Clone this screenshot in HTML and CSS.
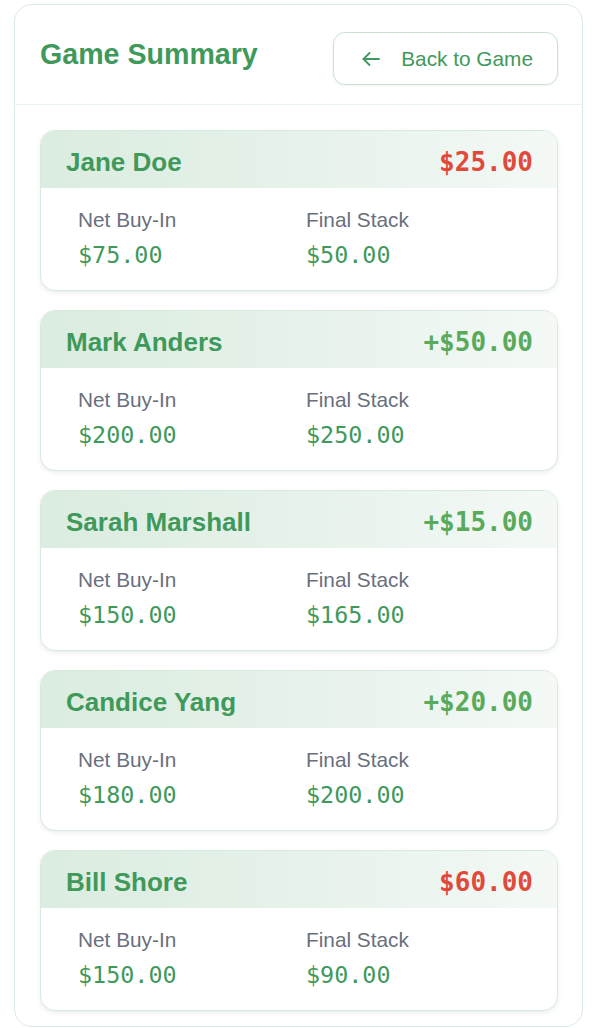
FILE: index.html
```html
<!DOCTYPE html>
<html lang="en">
<head>
<meta charset="utf-8">
<title>Game Summary</title>
<link rel="stylesheet" href="styles.css">
</head>
<body>
<div class="page">
  <section class="panel">
    <header class="panel-head">
      <h1 class="title">Game Summary</h1>
      <button class="back-btn" type="button">
        <svg class="back-icon" width="18" height="14" viewBox="0 0 18 14" fill="none" stroke="currentColor" stroke-width="1.8" stroke-linecap="round" stroke-linejoin="round"><path d="M17 7H1.5"/><path d="M7.5 1L1.5 7l6 6"/></svg>
        <span>Back to Game</span>
      </button>
    </header>
    <div class="players">
      <article class="player">
        <div class="player-head"><span class="name">Jane Doe</span><span class="amount neg">$25.00</span></div>
        <div class="player-body">
          <div class="stat"><div class="label">Net Buy-In</div><div class="value">$75.00</div></div>
          <div class="stat"><div class="label">Final Stack</div><div class="value">$50.00</div></div>
        </div>
      </article>
      <article class="player">
        <div class="player-head"><span class="name">Mark Anders</span><span class="amount pos">+$50.00</span></div>
        <div class="player-body">
          <div class="stat"><div class="label">Net Buy-In</div><div class="value">$200.00</div></div>
          <div class="stat"><div class="label">Final Stack</div><div class="value">$250.00</div></div>
        </div>
      </article>
      <article class="player">
        <div class="player-head"><span class="name">Sarah Marshall</span><span class="amount pos">+$15.00</span></div>
        <div class="player-body">
          <div class="stat"><div class="label">Net Buy-In</div><div class="value">$150.00</div></div>
          <div class="stat"><div class="label">Final Stack</div><div class="value">$165.00</div></div>
        </div>
      </article>
      <article class="player">
        <div class="player-head"><span class="name">Candice Yang</span><span class="amount pos">+$20.00</span></div>
        <div class="player-body">
          <div class="stat"><div class="label">Net Buy-In</div><div class="value">$180.00</div></div>
          <div class="stat"><div class="label">Final Stack</div><div class="value">$200.00</div></div>
        </div>
      </article>
      <article class="player">
        <div class="player-head"><span class="name">Bill Shore</span><span class="amount neg">$60.00</span></div>
        <div class="player-body">
          <div class="stat"><div class="label">Net Buy-In</div><div class="value">$150.00</div></div>
          <div class="stat"><div class="label">Final Stack</div><div class="value">$90.00</div></div>
        </div>
      </article>
    </div>
  </section>
</div>
</body>
</html>
```

FILE: styles.css
```css
* { box-sizing: border-box; }

html, body {
  margin: 0;
  background: #ffffff;
  font-family: "Liberation Sans", Arial, sans-serif;
}

.page {
  padding: 4px 15px 0 14px;
}

.panel {
  border: 1px solid #d9ecdf;
  border-radius: 18px;
  background: #ffffff;
  padding-bottom: 15px;
}

.panel-head {
  display: flex;
  justify-content: space-between;
  align-items: flex-start;
  padding: 27px 24px 19px 25px;
  border-bottom: 1px solid #eaf4ee;
}

.title {
  margin: 4.5px 0 0;
  font-size: 28.6px;
  line-height: 34px;
  font-weight: 700;
  color: #3f995b;
}

.back-btn {
  display: flex;
  align-items: center;
  height: 53px;
  padding: 0 24px 0 28px;
  gap: 21px;
  border: 1px solid #c9e3d1;
  border-radius: 12px;
  background: #ffffff;
  color: #3f995b;
  font-family: "Liberation Sans", Arial, sans-serif;
  font-size: 20.8px;
  box-shadow: 0 1px 3px rgba(60, 120, 80, 0.08);
}

.back-icon { display: block; flex: none; }

.players {
  display: flex;
  flex-direction: column;
  gap: 19px;
  padding: 25px 24px 0 25px;
}

.player {
  border: 1px solid #d6eadd;
  border-radius: 15px;
  overflow: hidden;
  background: #ffffff;
  box-shadow: 0 2px 4px rgba(40, 80, 55, 0.09);
}

.player-head {
  display: flex;
  justify-content: space-between;
  align-items: baseline;
  padding: 16px 24px 10px 25px;
  background: linear-gradient(90deg, #dbece0 0%, #e6f2ea 50%, #f4f9f6 100%);
}

.name {
  font-size: 26px;
  line-height: 31px;
  font-weight: 700;
  color: #3f995b;
}

.amount {
  font-family: "DejaVu Sans Mono", "Liberation Mono", monospace;
  font-size: 26px;
  line-height: 31px;
  font-weight: 700;
}

.amount.neg { color: #e04a3b; }
.amount.pos { color: #5aaa5b; }

.player-body {
  display: grid;
  grid-template-columns: 1fr 1fr;
  column-gap: 14px;
  padding: 20px 37px 21px 37px;
}

.label {
  font-size: 20.8px;
  line-height: 24px;
  color: #6a6f7d;
}

.value {
  margin-top: 9px;
  font-family: "DejaVu Sans Mono", "Liberation Mono", monospace;
  font-size: 23.4px;
  line-height: 28px;
  color: #3f995b;
}
```
